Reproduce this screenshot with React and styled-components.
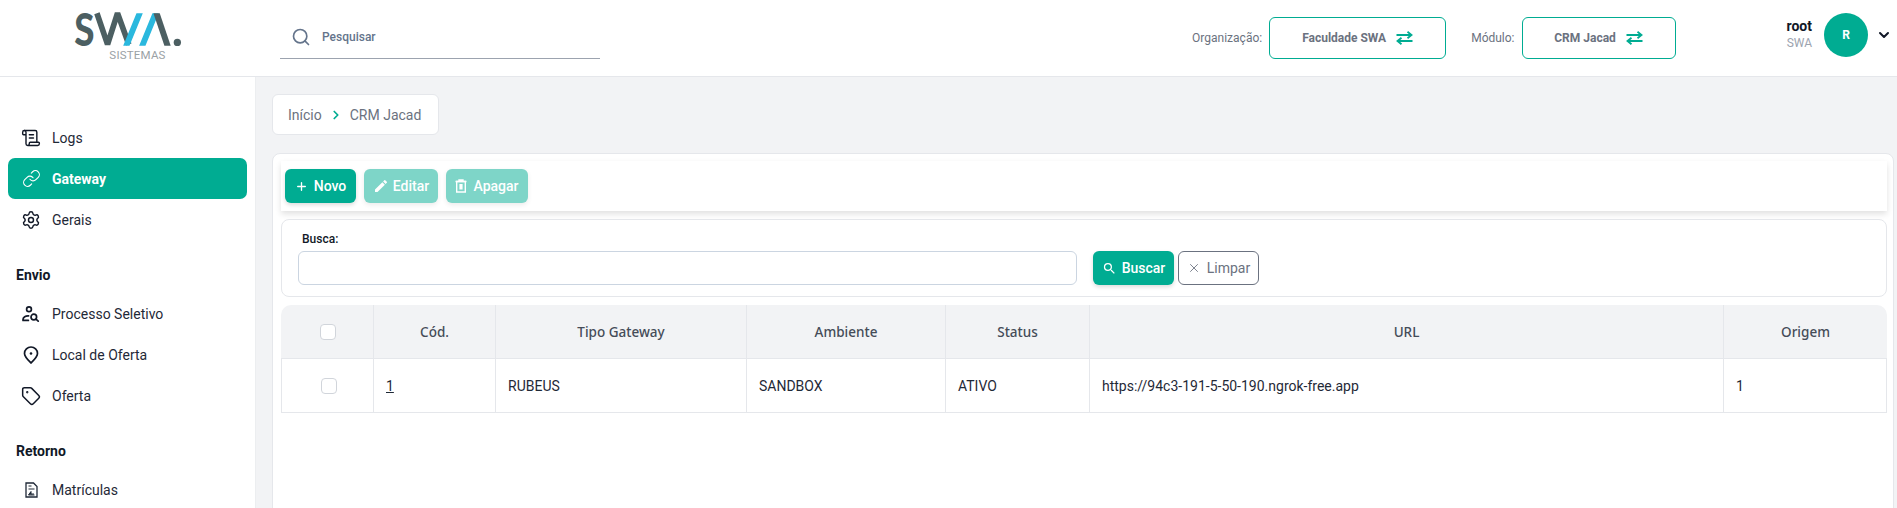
import React from 'react';
import styled, { createGlobalStyle } from 'styled-components';
import {
  ChevronDown,
  ChevronRight,
  Link,
  Plus,
  ScrollText,
  Search,
  Settings,
  Tag,
  X,
} from 'lucide-react';
import { MdEdit, MdSearch } from 'react-icons/md';

const TEAL = '#00ac92';

const GlobalStyle = createGlobalStyle`
  html, body {
    margin: 0;
    padding: 0;
    height: 100%;
    overflow: hidden;
    background: #fff;
    font-family: Roboto, "Liberation Sans", sans-serif;
  }
  * { box-sizing: border-box; }
`;

const Page = styled.div`
  width: 1897px;
  height: 508px;
  display: flex;
  flex-direction: column;
  overflow: hidden;
`;

const Header = styled.header`
  flex: 0 0 76px;
  display: flex;
  align-items: flex-start;
  background: #fff;
  border-bottom: 1px solid #e5e7eb;
`;

const LogoCell = styled.div`
  flex: 0 0 255px;
  display: flex;
  flex-direction: column;
  align-items: center;
  padding-top: 11px;
  svg {
    overflow: visible;
  }
`;

const LogoText = styled.span`
  margin: 2px 0 0 20px;
  font-size: 11.5px;
  line-height: 10px;
  color: #9aa1a5;
  letter-spacing: 0.2px;
`;

const SearchBar = styled.div`
  width: 320px;
  height: 59px;
  margin-left: 25px;
  padding-left: 11px;
  display: flex;
  align-items: center;
  gap: 11px;
  border-bottom: 1px solid #9ca3af;
  color: #64748b;
  span {
    font-size: 12px;
    font-weight: 500;
    margin-top: 15px;
  }
  svg {
    margin-top: 15px;
  }
`;

const Switchers = styled.div`
  margin-left: auto;
  display: flex;
  align-items: center;
  height: 76px;
`;

const SwitchLabel = styled.span`
  font-size: 12px;
  color: #6b7280;
  margin-right: 7px;
`;

const SwitchButton = styled.div`
  width: ${(props) => props.$width}px;
  height: 42px;
  margin-right: ${(props) => props.$gap}px;
  display: flex;
  align-items: center;
  justify-content: center;
  gap: 10px;
  border: 1px solid ${TEAL};
  border-radius: 6px;
  font-size: 12px;
  font-weight: 700;
  color: #6b7280;
`;

const UserBlock = styled.div`
  display: flex;
  align-items: center;
  height: 70px;
`;

const UserText = styled.div`
  display: flex;
  flex-direction: column;
  align-items: flex-end;
  margin-right: 12px;
`;

const UserName = styled.span`
  font-size: 14px;
  line-height: 17px;
  font-weight: 700;
  color: #111827;
`;

const UserOrg = styled.span`
  font-size: 12px;
  line-height: 17px;
  color: #9ca3af;
`;

const Avatar = styled.div`
  width: 44px;
  height: 44px;
  border-radius: 50%;
  display: flex;
  align-items: center;
  justify-content: center;
  background: ${TEAL};
  color: #fff;
  font-size: 12px;
  font-weight: 700;
`;

const Caret = styled.div`
  width: 29px;
  display: flex;
  justify-content: flex-end;
  padding-right: 5px;
  color: #111827;
`;

const Body = styled.div`
  flex: 1;
  display: flex;
  min-height: 0;
`;

const Sidebar = styled.nav`
  flex: 0 0 255px;
  padding: 40px 8px 0 8px;
  background: #fff;
`;

const NavItem = styled.div`
  height: 41px;
  padding-left: 13px;
  display: flex;
  align-items: center;
  gap: 11px;
  border-radius: 7px;
  font-size: 14px;
  font-weight: ${(props) => (props.$active ? 700 : 400)};
  color: ${(props) => (props.$active ? '#fff' : '#1f2937')};
  background: ${(props) => (props.$active ? TEAL : 'transparent')};
`;

const NavIcon = styled.span`
  width: 20px;
  height: 20px;
  display: flex;
  align-items: center;
  justify-content: center;
  color: ${(props) => (props.$light ? '#fff' : '#111827')};
`;

const NavTitle = styled.div`
  height: 20px;
  margin: 25px 0 8px 8px;
  font-size: 14px;
  line-height: 20px;
  font-weight: 700;
  color: #111827;
`;

const Main = styled.main`
  flex: 1;
  min-width: 0;
  padding: 17px 3px 0 16px;
  background: #f2f3f5;
  border-left: 1px solid #eceef0;
`;

const Breadcrumb = styled.div`
  width: 167px;
  height: 41px;
  padding-left: 15px;
  display: flex;
  align-items: center;
  gap: 7px;
  background: #fff;
  border: 1px solid #e5e7eb;
  border-radius: 6px;
  font-size: 14px;
  color: #6b7280;
  svg {
    color: ${TEAL};
  }
`;

const Card = styled.section`
  height: 400px;
  margin-top: 18px;
  padding: 7px 6px 0 8px;
  display: flex;
  flex-direction: column;
  gap: 8px;
  background: #fff;
  border: 1px solid #e5e7eb;
  border-radius: 8px;
`;

const Toolbar = styled.div`
  height: 50px;
  padding: 8px 4px;
  display: flex;
  gap: 8px;
  background: #fff;
  box-shadow: 0 3px 6px rgba(0, 0, 0, 0.12);
`;

const ActionButton = styled.button`
  height: 34px;
  width: ${(props) => props.$width}px;
  padding: 0;
  display: flex;
  align-items: center;
  justify-content: center;
  gap: ${(props) => props.$gap || 6}px;
  border: none;
  border-radius: 6px;
  background: ${TEAL};
  color: #fff;
  font-family: inherit;
  font-size: 14px;
  font-weight: 500;
  opacity: ${(props) => (props.disabled ? 0.5 : 1)};
  box-shadow: 0 2px 4px rgba(0, 0, 0, 0.14);
`;

const OutlineButton = styled(ActionButton)`
  background: #fff;
  color: #6b7280;
  font-weight: 400;
  border: 1px solid #6b7280;
  box-shadow: none;
`;

const FilterPanel = styled.div`
  height: 78px;
  padding: 11px 14px 0 16px;
  border: 1px solid #e5e7eb;
  border-radius: 8px;
`;

const FilterLabel = styled.label`
  display: block;
  height: 20px;
  margin-left: 4px;
  font-size: 12px;
  font-weight: 500;
  line-height: 17px;
  color: #111827;
`;

const FilterRow = styled.div`
  display: flex;
  align-items: center;
`;

const FilterInput = styled.input`
  width: 779px;
  height: 34px;
  margin-right: 16px;
  border: 1px solid #cbd5e1;
  border-radius: 6px;
  background: #fff;
  outline: none;
`;

const ButtonGap = styled.div`
  width: 4px;
`;

const Table = styled.table`
  width: 1606px;
  table-layout: fixed;
  border-collapse: separate;
  border-spacing: 0;
  font-size: 14px;
`;

const HeadCell = styled.th`
  height: 54px;
  padding: 0;
  text-align: center;
  background: #f2f3f5;
  font-family: "Noto Sans", Roboto, sans-serif;
  font-size: 13.5px;
  font-weight: 500;
  color: #454c58;
  border-bottom: 1px solid #e5e7eb;
  border-right: 1px solid #e5e7eb;
  &:first-child {
    padding-left: 2px;
    border-top-left-radius: 10px;
  }
  &:last-child {
    border-right: none;
    border-top-right-radius: 10px;
  }
`;

const BodyCell = styled.td`
  height: 54px;
  padding: 0 12px;
  color: #1f2937;
  border-bottom: 1px solid #e5e7eb;
  border-right: 1px solid #e5e7eb;
  &:first-child {
    padding: 0 0 0 2px;
    border-left: 1px solid #e5e7eb;
  }
`;

const Check = styled.div`
  width: 16px;
  height: 16px;
  margin: 0 auto;
  background: #fff;
  border: 1px solid #d1d5db;
  border-radius: 4px;
`;

const CodeLink = styled.span`
  text-decoration: underline;
  color: #1f2937;
`;

const SwapIcon = () => (
  <svg width="17" height="14" viewBox="0 0 17 14" fill="none" stroke={TEAL} strokeWidth="1.8">
    <path d="M0.5 4h15M11.5 0.8 15.5 4l-4 3.2" />
    <path d="M16.5 10h-15M5.5 6.8 1.5 10l4 3.2" />
  </svg>
);

const EnrollIcon = () => (
  <svg width="13" height="16" viewBox="0 0 13 16" fill="none" stroke="#1f2937" strokeWidth="1.3">
    <path d="M1 1h7.5L12 4.5V15H1z" />
    <path d="M3.5 4h3M3.5 7h6" strokeWidth="1" />
    <path d="M3.5 13h6M3.5 13l2.5-3.5V12h3" fill="#1f2937" strokeWidth="1" />
  </svg>
);

const SeekerIcon = () => (
  <svg width="18" height="16" viewBox="0 0 18 16" fill="none" stroke="currentColor" strokeWidth="1.7" strokeLinecap="round">
    <circle cx="7" cy="3.3" r="2.4" />
    <path d="M1 14.2v-0.7c0-2.4 2.6-3.8 5.6-3.6M1 14.4h5.4" />
    <circle cx="11.8" cy="11" r="2.8" />
    <path d="M14 13.2l2.2 2" />
  </svg>
);

const PinIcon = () => (
  <svg width="16" height="18" viewBox="0 0 16 18" fill="none" stroke="currentColor" strokeWidth="1.7">
    <path d="M8 17C4.5 13.6 1.5 10.8 1.5 7.5a6.5 6.5 0 0 1 13 0C14.5 10.8 11.5 13.6 8 17z" />
    <circle cx="8" cy="7.5" r="1.3" fill="currentColor" stroke="none" />
  </svg>
);

const TrashIcon = () => (
  <svg width="12" height="14" viewBox="0 0 12 14" fill="none" stroke="#fff" strokeWidth="1.4">
    <path d="M0.5 2.5h11M4 2.5V1h4v1.5" />
    <path d="M1.7 2.5h8.6V13H1.7z" />
    <path d="M4.4 5h3.2v5.5H4.4z" fill="#fff" stroke="none" />
  </svg>
);

const Logo = () => (
  <svg width="113" height="37" viewBox="60 30 340 110">
    <text
      transform="translate(70 134) scale(0.8 1)"
      fontFamily="Lato, sans-serif"
      fontWeight="900"
      fontSize="138"
      fill="#4c5f62"
    >
      S
    </text>
    <path
      d="M138 36l32 94 30-94 34 94"
      fill="none"
      stroke="#4c5f62"
      strokeWidth="17"
      strokeLinejoin="bevel"
    />
    <path d="M257 36h19l-40 98h-19zM305 36h19l-40 98h-19z" fill="#2ab8de" />
    <path d="M308 36h19l33 98h-19z" fill="#4c5f62" />
    <circle cx="380" cy="124" r="11" fill="#4c5f62" />
  </svg>
);

const columns = [93, 122, 251, 199, 144, 634, 163];
const headers = ['Cód.', 'Tipo Gateway', 'Ambiente', 'Status', 'URL', 'Origem'];
const row = ['RUBEUS', 'SANDBOX', 'ATIVO', 'https://94c3-191-5-50-190.ngrok-free.app', '1'];

const App = () => {
  return (
    <Page>
      <GlobalStyle />
      <Header>
        <LogoCell>
          <Logo />
          <LogoText>SISTEMAS</LogoText>
        </LogoCell>
        <SearchBar>
          <Search size={20} strokeWidth={2} />
          <span>Pesquisar</span>
        </SearchBar>
        <Switchers>
          <SwitchLabel>Organização:</SwitchLabel>
          <SwitchButton $width={177} $gap={25}>
            Faculdade SWA <SwapIcon />
          </SwitchButton>
          <SwitchLabel>Módulo:</SwitchLabel>
          <SwitchButton $width={154} $gap={111}>
            CRM Jacad <SwapIcon />
          </SwitchButton>
        </Switchers>
        <UserBlock>
          <UserText>
            <UserName>root</UserName>
            <UserOrg>SWA</UserOrg>
          </UserText>
          <Avatar>R</Avatar>
          <Caret>
            <ChevronDown size={16} strokeWidth={3} />
          </Caret>
        </UserBlock>
      </Header>
      <Body>
        <Sidebar>
          <NavItem>
            <NavIcon><ScrollText size={20} strokeWidth={1.7} /></NavIcon>
            Logs
          </NavItem>
          <NavItem $active>
            <NavIcon $light><Link size={19} strokeWidth={1.4} /></NavIcon>
            Gateway
          </NavItem>
          <NavItem>
            <NavIcon><Settings size={20} strokeWidth={1.7} /></NavIcon>
            Gerais
          </NavItem>
          <NavTitle>Envio</NavTitle>
          <NavItem>
            <NavIcon><SeekerIcon /></NavIcon>
            Processo Seletivo
          </NavItem>
          <NavItem>
            <NavIcon><PinIcon /></NavIcon>
            Local de Oferta
          </NavItem>
          <NavItem>
            <NavIcon><Tag size={20} strokeWidth={1.8} /></NavIcon>
            Oferta
          </NavItem>
          <NavTitle>Retorno</NavTitle>
          <NavItem>
            <NavIcon><EnrollIcon /></NavIcon>
            Matrículas
          </NavItem>
        </Sidebar>
        <Main>
          <Breadcrumb>
            Início <ChevronRight size={14} strokeWidth={3} /> CRM Jacad
          </Breadcrumb>
          <Card>
            <Toolbar>
              <ActionButton $width={71}>
                <Plus size={13} strokeWidth={2.5} /> Novo
              </ActionButton>
              <ActionButton $width={74} $gap={4} disabled>
                <MdEdit size={16} /> Editar
              </ActionButton>
              <ActionButton $width={82} $gap={6} disabled>
                <TrashIcon /> Apagar
              </ActionButton>
            </Toolbar>
            <FilterPanel>
              <FilterLabel>Busca:</FilterLabel>
              <FilterRow>
                <FilterInput />
                <ActionButton $width={81} $gap={5}>
                  <MdSearch size={15} /> Buscar
                </ActionButton>
                <ButtonGap />
                <OutlineButton $width={81}>
                  <X size={14} strokeWidth={1.5} /> Limpar
                </OutlineButton>
              </FilterRow>
            </FilterPanel>
            <Table>
              <colgroup>
                {columns.map((width, index) => (
                  <col key={index} width={width} />
                ))}
              </colgroup>
              <thead>
                <tr>
                  <HeadCell>
                    <Check />
                  </HeadCell>
                  {headers.map((title) => (
                    <HeadCell key={title}>{title}</HeadCell>
                  ))}
                </tr>
              </thead>
              <tbody>
                <tr>
                  <BodyCell>
                    <Check />
                  </BodyCell>
                  <BodyCell>
                    <CodeLink>1</CodeLink>
                  </BodyCell>
                  {row.map((value) => (
                    <BodyCell key={value}>{value}</BodyCell>
                  ))}
                </tr>
              </tbody>
            </Table>
          </Card>
        </Main>
      </Body>
    </Page>
  );
};

export default App;
